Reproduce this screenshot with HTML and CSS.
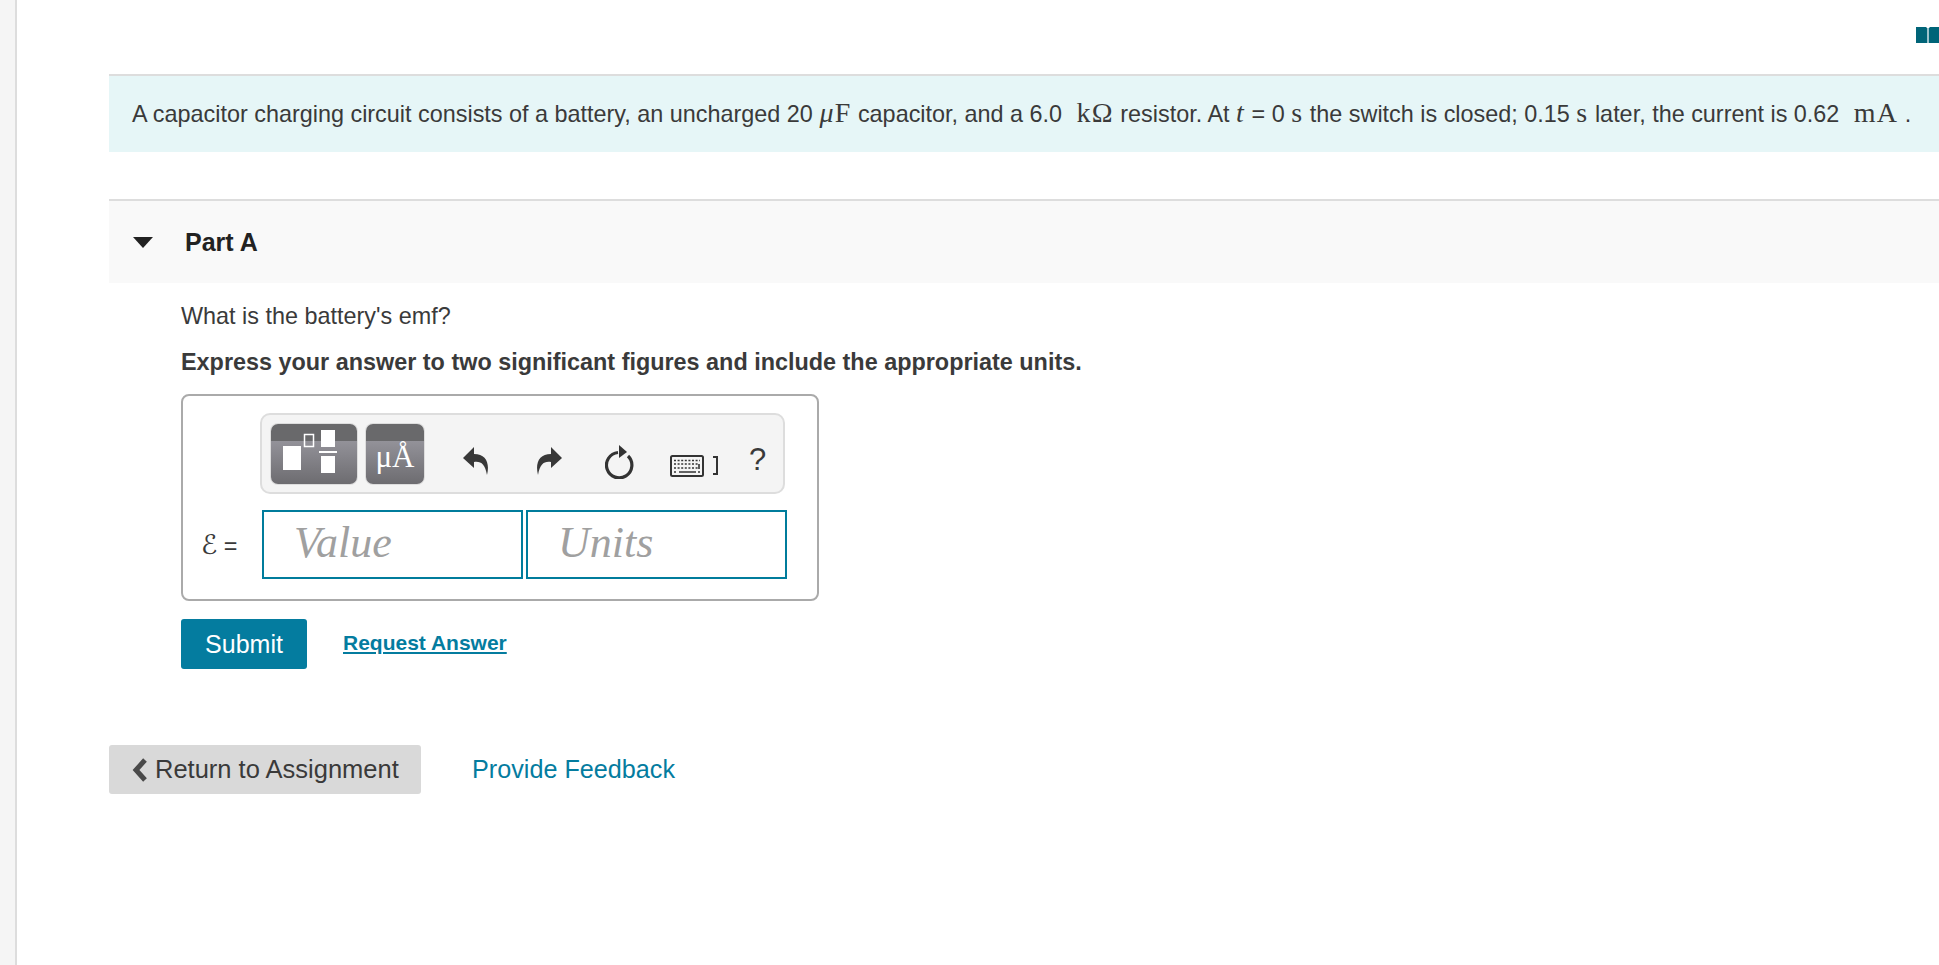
FILE: index.html
```html
<!DOCTYPE html>
<html>
  <head>
    <meta charset="UTF-8">
    <title>Part A</title>
    <link rel="stylesheet" href="styles.css">
  </head>
  <body>
    <div class="page">
      <div class="rail"></div>
      <div class="main">
        <div class="topbar">
          <svg class="book" width="36" height="18" viewBox="0 0 36 18">
            <path d="M0 1 h10 l1 1 v15 h-11 z M13 2 l1 -1 h10 v16 h-11 z" fill="#006478"/>
            <path d="M11 2 h2 v15 h-2 z" fill="#9cc3cc"/>
          </svg>
        </div>

        <div class="intro">
          A capacitor charging circuit consists of a battery, an uncharged 20 <span class="math"><i>μ</i>F</span> capacitor, and a 6.0 <span class="math gap">kΩ</span> resistor. At <span class="math"><i>t</i></span> = 0 <span class="math">s</span> the switch is closed; 0.15 <span class="math">s</span> later, the current is 0.62 <span class="math gap">mA</span> .
        </div>

        <div class="part-head">
          <span class="arrow"></span>
          <h2>Part A</h2>
        </div>

        <div class="part-body">
          <p class="question">What is the battery's emf?</p>
          <p class="instruction">Express your answer to two significant figures and include the appropriate units.</p>

          <div class="answer-box">
            <div class="toolbar">
              <div class="tool-btn tool-templates">
                <svg width="86" height="60" viewBox="0 0 86 60">
                  <rect x="12" y="22" width="18" height="24" fill="#fff"/>
                  <rect x="33.5" y="10.5" width="9" height="12" fill="none" stroke="#fff" stroke-width="1.5"/>
                  <rect x="50" y="6" width="14" height="17" fill="#fff"/>
                  <rect x="48" y="27" width="18" height="2" fill="#fff"/>
                  <rect x="50" y="32" width="14" height="17" fill="#fff"/>
                </svg>
              </div>
              <div class="tool-btn tool-units">μÅ</div>
              <svg class="icon icon-undo" width="26" height="28" viewBox="0 0 26 28">
                <path d="M11 0 L0 11 L11 21 V15 C18 14 22 17 24 28 C27 16 23 7 11 7 Z" fill="#383838"/>
              </svg>
              <svg class="icon icon-redo" width="26" height="28" viewBox="0 0 26 28">
                <path d="M15 0 L26 11 L15 21 V15 C8 14 4 17 2 28 C-1 16 3 7 15 7 Z" fill="#383838"/>
              </svg>
              <svg class="icon icon-reset" width="30" height="34" viewBox="0 0 30 34">
                <path d="M23 11 A12.7 12.7 0 1 1 13 7.5" fill="none" stroke="#333" stroke-width="3.2"/>
                <path d="M14 0 L22 7 L14 13 Z" fill="#333"/>
              </svg>
              <svg class="icon icon-keys" width="34" height="22" viewBox="0 0 34 22">
                <rect x="1" y="1" width="32" height="20" rx="1.5" fill="none" stroke="#333" stroke-width="2"/>
                <path d="M4 5.5 H30 M4 9 H28 M4 13 H28" stroke="#333" stroke-width="1.6" stroke-dasharray="2 1.6" fill="none"/>
                <path d="M9 17 H26 M4 17 H6 M28 17 H30 M29 9 V14" stroke="#333" stroke-width="1.6" fill="none"/>
              </svg>
              <span class="bracket"></span>
              <span class="help">?</span>
            </div>
            <div class="entry-row">
              <span class="var"><span class="script">ℰ</span> =</span>
              <div class="field">Value</div>
              <div class="field field-units">Units</div>
            </div>
          </div>

          <div class="actions">
            <span class="btn-submit">Submit</span>
            <a class="link-answer" href="#">Request Answer</a>
          </div>
        </div>

        <div class="footer">
          <span class="btn-return">
            <svg class="chevron" width="16" height="24" viewBox="0 0 16 24"><path d="M13 2 L4 12 L13 22" fill="none" stroke="#4a4a4a" stroke-width="5"/></svg>
            Return to Assignment
          </span>
          <a class="link-feedback" href="#">Provide Feedback</a>
        </div>
      </div>
    </div>
  </body>
</html>
```

FILE: styles.css
```css
html, body {
  margin: 0;
  padding: 0;
  background-color: #fff;
}

body {
  font-family: "Liberation Sans", Arial, sans-serif;
  font-size: 23.4px;
  color: #3a3a3a;
}

.page {
  display: flex;
  height: 965px;
  overflow: hidden;
}

.rail {
  width: 15px;
  flex: none;
  background-color: #f5f5f5;
  border-right: 2px solid #ddd;
}

.main {
  flex: 1;
  min-width: 0;
  padding-left: 92px;
}

.topbar {
  height: 74px;
  display: flex;
  justify-content: flex-end;
  align-items: flex-start;
}

.book {
  flex: none;
  margin-top: 26px;
  margin-right: -13px;
}

.intro {
  border-top: 2px solid #ddd;
  background-color: #e6f6f7;
  height: 76px;
  line-height: 74px;
  padding-left: 23px;
  white-space: nowrap;
}

.math {
  font-family: "Liberation Serif", "DejaVu Serif", serif;
  font-size: 28px;
  letter-spacing: 1.2px;
}

.gap {
  margin-left: 8px;
}

.part-head {
  margin-top: 47px;
  border-top: 2px solid #ddd;
  background-color: #f9f9f9;
  height: 82px;
  display: flex;
  align-items: center;
  padding-left: 24px;
}

.arrow {
  width: 0;
  height: 0;
  border-left: 10px solid transparent;
  border-right: 10px solid transparent;
  border-top: 11px solid #222;
}

.part-head h2 {
  margin: 0 0 0 32px;
  font-size: 25px;
  font-weight: bold;
  color: #222;
}

.part-body {
  padding-left: 72px;
}

.question {
  margin: 0;
  padding-top: 18px;
  line-height: 30px;
}

.instruction {
  margin: 16px 0 0;
  line-height: 30px;
  font-weight: bold;
}

.answer-box {
  box-sizing: border-box;
  margin-top: 17px;
  width: 638px;
  height: 207px;
  border: 2px solid #aaa;
  border-radius: 8px;
  padding: 17px 0 0 77px;
}

.toolbar {
  box-sizing: border-box;
  width: 525px;
  height: 81px;
  background-color: #f4f4f4;
  border: 2px solid #ddd;
  border-radius: 10px;
  display: flex;
  align-items: flex-start;
  padding: 9px 0 0 9px;
}

.tool-btn {
  box-sizing: border-box;
  flex: none;
  height: 60px;
  border-radius: 7px;
  background: linear-gradient(#69696b 0, #69696b 17px, #939299 17px, #6d6c70 100%);
  box-shadow: 0 0 0 1px #ddd;
}

.tool-templates {
  width: 86px;
}

.tool-units {
  width: 58px;
  margin-left: 9px;
  color: #fff;
  font-family: "Liberation Serif", serif;
  font-size: 31px;
  line-height: 66px;
  text-align: center;
}

.icon {
  flex: none;
}

.icon-undo {
  margin: 23px 0 0 39px;
}

.icon-redo {
  margin: 23px 0 0 47px;
}

.icon-reset {
  margin: 21px 0 0 43px;
}

.icon-keys {
  margin: 31px 0 0 35px;
}

.bracket {
  box-sizing: border-box;
  flex: none;
  width: 5px;
  height: 19px;
  margin: 32px 0 0 9px;
  border: 2px solid #333;
  border-left: none;
}

.help {
  flex: none;
  margin: 19px 0 0 31px;
  font-size: 31px;
  line-height: 34px;
}

.entry-row {
  display: flex;
  align-items: center;
  margin-top: 16px;
  margin-left: -59px;
}

.var {
  flex: none;
  width: 61px;
  white-space: nowrap;
}

.script {
  font-family: "DejaVu Sans", serif;
  font-style: italic;
  font-size: 27px;
}

.field {
  box-sizing: border-box;
  flex: none;
  width: 261px;
  height: 69px;
  border: 2px solid #007c9c;
  padding-left: 30px;
  font-family: "Liberation Serif", serif;
  font-style: italic;
  font-size: 44px;
  line-height: 62px;
  color: #a0a0a0;
}

.field-units {
  margin-left: 3px;
}

.actions {
  display: flex;
  align-items: center;
  margin-top: 18px;
}

.btn-submit {
  width: 126px;
  height: 50px;
  line-height: 50px;
  text-align: center;
  background-color: #047c9f;
  color: #fff;
  border-radius: 3px;
  font-size: 25px;
}

.link-answer {
  margin-left: 36px;
  margin-top: -2px;
  font-size: 21px;
  font-weight: bold;
  color: #047c9f;
}

.footer {
  display: flex;
  align-items: center;
  margin-top: 76px;
}

.btn-return {
  box-sizing: border-box;
  display: flex;
  align-items: center;
  width: 312px;
  height: 49px;
  padding-left: 23px;
  background-color: #d9d9d9;
  border-radius: 3px;
  font-size: 25.5px;
  white-space: nowrap;
}

.chevron {
  flex: none;
  margin-right: 7px;
}

.link-feedback {
  margin-left: 51px;
  font-size: 25.2px;
  color: #047c9f;
  text-decoration: none;
}
```
